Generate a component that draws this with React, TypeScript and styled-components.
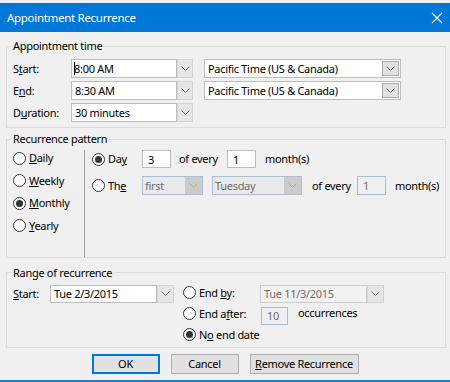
import React from 'react';
import styled, { createGlobalStyle } from 'styled-components';

const Global = createGlobalStyle`
  html, body { margin: 0; padding: 0; background: #f0f0f0; }
  body {
    font-family: "Noto Sans", "Liberation Sans", sans-serif;
    font-size: 11px;
    letter-spacing: -0.3px;
    color: #000;
  }
  * { box-sizing: border-box; }
`;

const Window = styled.div`
  width: 450px;
  height: 382px;
  background: #f0f0f0;
  display: flex;
  flex-direction: column;
  padding-top: 3px;
  border-bottom: 2px solid #1a7fd4;
  overflow: hidden;
`;

const TitleBar = styled.div`
  height: 29px;
  flex: none;
  background: #0078d7;
  color: #fff;
  display: flex;
  align-items: center;
  justify-content: space-between;
  padding: 0 7px 0 7px;
  font-size: 11.5px;
`;

const CloseIcon = () => (
  <svg width="12" height="12" viewBox="0 0 12 12">
    <path d="M1 1 L11 11 M11 1 L1 11" stroke="#fff" strokeWidth="1.1" fill="none" />
  </svg>
);

const Body = styled.div`
  flex: 1;
  display: flex;
  flex-direction: column;
  padding: 6px 4px 0 6px;
`;

const Group = styled.fieldset<{ $pt: number; $pb: number; $mt?: number }>`
  margin: ${p => p.$mt ?? 0}px 0 0 0;
  padding: ${p => p.$pt}px 6px ${p => p.$pb}px 6px;
  border: 1px solid #dcdcdc;
  min-width: 0;
`;

const Legend = styled.legend`
  padding: 0 2px;
  margin-left: -2px;
  line-height: 16px;
  font-size: 11px;
`;

const Key = styled.span`
  text-decoration: underline;
  text-underline-offset: 1px;
`;

const TimeGrid = styled.div`
  display: grid;
  grid-template-columns: 58px 133px 197px;
  row-gap: 3px;
  grid-auto-rows: 19px;
  align-items: center;
`;

const Label = styled.span<{ $w?: number }>`
  line-height: 16px;
  white-space: nowrap;
  ${p => (p.$w ? `width: ${p.$w}px; flex: none;` : '')}
`;

/* ---- combo boxes ---- */
const SplitCombo = styled.div<{ $w: number; $h?: number }>`
  width: ${p => p.$w}px;
  height: ${p => p.$h ?? 19}px;
  display: flex;
  flex: none;
`;

const Field = styled.div<{ $disabled?: boolean }>`
  flex: 1;
  min-width: 0;
  height: 100%;
  border: 1px solid ${p => (p.$disabled ? '#cccccc' : '#bdbdbd')};
  background: ${p => (p.$disabled ? '#f2f2f2' : '#fff')};
  color: ${p => (p.$disabled ? '#6d6d6d' : '#000')};
  display: flex;
  align-items: center;
  padding-left: 3px;
  white-space: nowrap;
  overflow: hidden;
`;

const DropBtn = styled.div<{ $w?: number; $tone?: 'light' | 'mid' | 'dis' }>`
  width: ${p => p.$w ?? 16}px;
  flex: none;
  height: 100%;
  display: flex;
  align-items: center;
  justify-content: center;
  background: ${p => (p.$tone === 'dis' ? '#cccccc' : p.$tone === 'mid' ? '#e1e1e1' : '#e6e6e6')};
  border: 1px solid ${p => (p.$tone === 'dis' ? '#cccccc' : p.$tone === 'mid' ? '#adadad' : '#d4d4d4')};
`;

const InsetCombo = styled.div<{ $w: number; $disabled?: boolean }>`
  width: ${p => p.$w}px;
  height: 19px;
  flex: none;
  display: flex;
  border: 1px solid ${p => (p.$disabled ? '#adbdd2' : '#bdbdbd')};
  background: ${p => (p.$disabled ? '#eaeaea' : '#fff')};
  color: ${p => (p.$disabled ? '#6d6d6d' : '#000')};
  padding: ${p => (p.$disabled ? '0' : '1px')};
`;

const InsetText = styled.div`
  flex: 1;
  min-width: 0;
  display: flex;
  align-items: center;
  padding-left: 2px;
  white-space: nowrap;
  overflow: hidden;
`;

const Chevron = ({ color = '#666' }: { color?: string }) => (
  <svg width="9" height="5" viewBox="0 0 9 5">
    <polyline points="0.5,0.5 4.5,4.5 8.5,0.5" stroke={color} strokeWidth="1" fill="none" />
  </svg>
);

const Caret = styled.span`
  display: inline-block;
  width: 1px;
  height: 13px;
  background: #000;
  margin-right: -1px;
  margin-left: -1px;
`;

const NumBox = styled.div<{ $w: number; $disabled?: boolean; $h?: number }>`
  width: ${p => p.$w}px;
  height: ${p => p.$h ?? 18}px;
  flex: none;
  border: 1px solid ${p => (p.$disabled ? '#a9bdd6' : '#bdbdbd')};
  background: ${p => (p.$disabled ? '#f0f0f0' : '#fff')};
  color: ${p => (p.$disabled ? '#6d6d6d' : '#000')};
  display: flex;
  align-items: center;
  padding-left: 5px;
`;

/* ---- radios ---- */
const Radio = styled.label<{ $w?: number }>`
  display: flex;
  align-items: center;
  gap: 3px;
  line-height: 16px;
  height: 16px;
  white-space: nowrap;
  flex: none;
  ${p => (p.$w ? `width: ${p.$w}px;` : '')}
`;

const Circle = styled.span<{ $checked?: boolean }>`
  width: 13px;
  height: 13px;
  flex: none;
  border: 1px solid #333;
  border-radius: 50%;
  background: #fff;
  display: inline-flex;
  align-items: center;
  justify-content: center;
  &::after {
    content: '';
    width: 7px;
    height: 7px;
    border-radius: 50%;
    background: #333;
    display: ${p => (p.$checked ? 'block' : 'none')};
  }
`;

/* ---- recurrence pattern ---- */
const PatternRow = styled.div`
  display: flex;
`;

const KindColumn = styled.div`
  width: 72px;
  flex: none;
  margin-top: 3px;
  padding-bottom: 23px;
  border-right: 1px solid #a0a0a0;
  display: flex;
  flex-direction: column;
  gap: 6.5px;
`;

const DetailColumn = styled.div`
  flex: 1;
  margin-top: 3px;
  padding-left: 7px;
  display: flex;
  flex-direction: column;
  gap: 8px;
`;

const Line = styled.div<{ $h: number }>`
  display: flex;
  align-items: center;
  height: ${p => p.$h}px;
`;

const Gap = styled.span<{ $w: number }>`
  width: ${p => p.$w}px;
  flex: none;
`;

/* ---- range ---- */
const RangeRow = styled.div`
  display: flex;
  align-items: flex-start;
`;

const EndColumn = styled.div`
  display: flex;
  flex-direction: column;
  gap: 2px;
  margin-left: 9px;
`;

const EndLine = styled.div<{ $h: number }>`
  display: flex;
  align-items: flex-start;
  height: ${p => p.$h}px;
`;

/* ---- buttons ---- */
const ButtonRow = styled.div`
  display: flex;
  justify-content: center;
  gap: 11px;
  margin-top: 6px;
  margin-left: -6px;
  margin-right: -4px;
`;

const Button = styled.button<{ $w: number; $default?: boolean }>`
  width: ${p => p.$w}px;
  height: 20px;
  padding: 0;
  font: inherit;
  letter-spacing: inherit;
  color: #000;
  background: #e1e1e1;
  border: 1px solid ${p => (p.$default ? '#0078d7' : '#adadad')};
  box-shadow: ${p => (p.$default ? 'inset 0 0 0 1px #0078d7' : 'none')};
  display: flex;
  align-items: center;
  justify-content: center;
`;

const TzCombo = () => (
  <InsetCombo $w={197}>
    <InsetText>Pacific Time (US &amp; Canada)</InsetText>
    <DropBtn $w={17} $tone="mid"><Chevron /></DropBtn>
  </InsetCombo>
);

export default function App() {
  return (
    <>
      <Global />
      <Window>
        <TitleBar>
          <span>Appointment Recurrence</span>
          <CloseIcon />
        </TitleBar>
        <Body>
          <Group $pt={5} $pb={5}>
            <Legend>Appointment time</Legend>
            <TimeGrid>
              <Label>S<Key>t</Key>art:</Label>
              <SplitCombo $w={122}>
                <Field><Caret />8:00 AM</Field>
                <DropBtn><Chevron /></DropBtn>
              </SplitCombo>
              <TzCombo />

              <Label>E<Key>n</Key>d:</Label>
              <SplitCombo $w={122}>
                <Field>8:30 AM</Field>
                <DropBtn><Chevron /></DropBtn>
              </SplitCombo>
              <TzCombo />

              <Label>D<Key>u</Key>ration:</Label>
              <SplitCombo $w={122}>
                <Field>30 minutes</Field>
                <DropBtn><Chevron /></DropBtn>
              </SplitCombo>
            </TimeGrid>
          </Group>

          <Group $pt={0} $pb={0} $mt={3}>
            <Legend>Recurrence pattern</Legend>
            <PatternRow>
              <KindColumn>
                <Radio><Circle /><span><Key>D</Key>aily</span></Radio>
                <Radio><Circle /><span><Key>W</Key>eekly</span></Radio>
                <Radio><Circle $checked /><span><Key>M</Key>onthly</span></Radio>
                <Radio><Circle /><span><Key>Y</Key>early</span></Radio>
              </KindColumn>
              <DetailColumn>
                <Line $h={18}>
                  <Radio $w={50}><Circle $checked /><span>Da<Key>y</Key></span></Radio>
                  <NumBox $w={29}>3</NumBox>
                  <Gap $w={8} />
                  <Label $w={48}>of every</Label>
                  <NumBox $w={29}>1</NumBox>
                  <Gap $w={9} />
                  <Label>month(s)</Label>
                </Line>
                <Line $h={19}>
                  <Radio $w={50}><Circle /><span>Th<Key>e</Key></span></Radio>
                  <InsetCombo $w={61} $disabled>
                    <InsetText>first</InsetText>
                    <DropBtn $w={17} $tone="dis"><Chevron color="#a8a8a8" /></DropBtn>
                  </InsetCombo>
                  <Gap $w={9} />
                  <InsetCombo $w={90} $disabled>
                    <InsetText>Tuesday</InsetText>
                    <DropBtn $w={17} $tone="dis"><Chevron color="#a8a8a8" /></DropBtn>
                  </InsetCombo>
                  <Gap $w={10} />
                  <Label $w={45}>of every</Label>
                  <NumBox $w={29} $h={19} $disabled>1</NumBox>
                  <Gap $w={9} />
                  <Label>month(s)</Label>
                </Line>
              </DetailColumn>
            </PatternRow>
          </Group>

          <Group $pt={4} $pb={4} $mt={7}>
            <Legend>Range of recurrence</Legend>
            <RangeRow>
              <Label $w={37} style={{ marginTop: 1 }}><Key>S</Key>tart:</Label>
              <SplitCombo $w={124} $h={18}>
                <Field>Tue 2/3/2015</Field>
                <DropBtn $w={17}><Chevron /></DropBtn>
              </SplitCombo>
              <EndColumn>
                <EndLine $h={19}>
                  <Radio $w={77}><Circle /><span>End <Key>b</Key>y:</span></Radio>
                  <SplitCombo $w={124} $h={18}>
                    <Field $disabled>Tue 11/3/2015</Field>
                    <DropBtn $w={17}><Chevron color="#777" /></DropBtn>
                  </SplitCombo>
                </EndLine>
                <EndLine $h={19}>
                  <Radio $w={78}><Circle /><span>End a<Key>f</Key>ter:</span></Radio>
                  <NumBox $w={27} $disabled style={{ marginTop: 1 }}>10</NumBox>
                  <Gap $w={10} />
                  <Label style={{ marginTop: -1 }}>occurrences</Label>
                </EndLine>
                <EndLine $h={16}>
                  <Radio><Circle $checked /><span>N<Key>o</Key> end date</span></Radio>
                </EndLine>
              </EndColumn>
            </RangeRow>
          </Group>

          <ButtonRow>
            <Button $w={68} $default>OK</Button>
            <Button $w={68}>Cancel</Button>
            <Button $w={109}><span><Key>R</Key>emove Recurrence</span></Button>
          </ButtonRow>
        </Body>
      </Window>
    </>
  );
}
